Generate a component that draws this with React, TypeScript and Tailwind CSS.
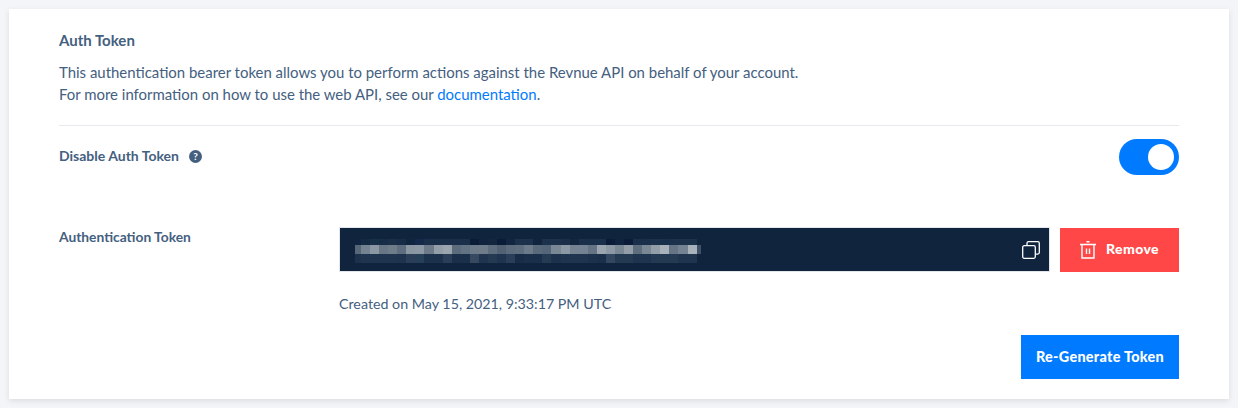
const rows = [
  ["#0f2540","#142a44","#16304a","#172c46","#1a3049","#172c46","#0f2540","#15294a","#1a2f4a","#1a2f4a","#1a2f4a","#1a2f4a","#1a2f4a","#0b1c38","#10233f","#12263f","#0b1c38","#122642","#1c314c","#1c314c","#10233f","#1c314c","#1c314c","#1a2f4a","#12263f","#1a2f4a","#1a2f4a","#1a2f4a","#0b1c38","#10233f","#0b1c38","#1a2f4a","#1a2f4a","#1c314c","#1a2f4a","#1c314c","#1c314c","#1c314c"],
  ["#576778","#748291","#8b97a3","#687685","#6f7d8b","#5f6e7e","#8a96a2","#8c98a4","#6c7a89","#939ea9","#9aa5af","#5d6c7c","#647383","#6c7a89","#6f7d8b","#5f6e7e","#526274","#5d6c7c","#5f6e7e","#6c7a89","#5a6a7a","#55657a","#7a8896","#8c98a4","#748291","#748291","#657484","#9aa5af","#8c98a4","#7a8896","#939ea9","#5f6e7e","#7a8896","#939ea9","#a9b2bb","#667585","#748291","#a9b2bb","#3f5168"],
  ["#1c314c","#1f344e","#1f344e","#1f344e","#1f344e","#1e334d","#2a3e57","#27405a","#1c314c","#1c314c","#2a3e57","#1a2f4a","#1a2f4a","#36495f","#1f344e","#243952","#1f344e","#2a3e57","#172c46","#1a2f4a","#1a2f4a","#253a53","#1c314c","#1f344e","#1f344e","#1f344e","#1c314c","#1a2f4a","#344760","#243952","#243952","#1f344e","#1f344e","#243952","#243952","#243952","#1f344e","#1f344e"],
];

const rowTop = [0, 6, 15];
const rowHeight = [6, 9, 9];
const pitch = 9.07;

function TokenBlur() {
  return (
    <svg width="346" height="24" viewBox="0 0 346 24" className="mt-[3px] block" shapeRendering="crispEdges">
      {rows.map((row, y) =>
        row.map((fill, x) => (
          <rect
            key={`${y}-${x}`}
            x={x === 0 ? 0 : 6 + (x - 1) * pitch}
            y={rowTop[y]}
            width={x === 0 ? 6 : x === 38 ? 4.4 : pitch}
            height={rowHeight[y]}
            fill={fill}
          />
        ))
      )}
    </svg>
  );
}

export default function App() {
  return (
    <div className="min-h-[408px] bg-[#f4f5f8] p-[9px] font-['Lato','Open_Sans',sans-serif] text-[#44607f]">
      <div className="h-[390px] bg-white pl-[50px] pr-[50px] pt-[22px] shadow-[0_2px_6px_rgba(0,0,0,0.1)]">
        <h2 className="text-[15px] font-bold leading-[18px]">Auth Token</h2>
        <p className="mt-[12px] text-[14.94px] leading-[22px]">
          This authentication bearer token allows you to perform actions against the Revnue API on behalf of your account.
          <br />
          For more information on how to use the web API, see our{" "}
          <a className="text-[#007bff]">documentation</a>.
        </p>

        <div className="mt-[20px] flex items-start justify-between border-t border-[#e8e9ec] pt-[13px]">
          <div className="mt-[8px] flex items-center text-[14px] font-bold leading-[18px]">
            Disable Auth Token
            <span className="ml-[10px] flex h-[13px] w-[13px] items-center justify-center rounded-full bg-[#44607f] text-[10px] font-bold leading-none text-white">
              ?
            </span>
          </div>
          <div className="flex h-[36px] w-[60px] items-center justify-end rounded-full bg-[#007bff] pr-[5px]">
            <div className="h-[26px] w-[26px] rounded-full bg-white" />
          </div>
        </div>

        <div className="mt-[52px] flex items-start">
          <div className="mt-[1px] w-[280px] text-[13.8px] font-bold leading-[18px]">Authentication Token</div>
          <div className="flex-1">
            <div className="flex gap-[10px]">
              <div className="flex h-[45px] flex-1 items-center justify-between border border-[#e3e6ea] bg-[#10243e] pl-[15px] pr-[9px]">
                <TokenBlur />
                <svg width="18" height="18" viewBox="0 0 18 18" fill="none" stroke="white" strokeWidth="1.3">
                  <rect x="0.7" y="4.7" width="12.6" height="12.6" rx="1.5" />
                  <path d="M5 4.5V2.2C5 1.4 5.6 0.7 6.4 0.7h9.4c.8 0 1.5.7 1.5 1.5v9.4c0 .8-.7 1.5-1.5 1.5h-2.3" />
                </svg>
              </div>
              <button className="mt-px flex h-[44px] w-[119px] items-center justify-center gap-[10px] bg-[#ff4747] text-[14px] font-black tracking-[0.03em] text-white">
                <svg width="16" height="18" viewBox="0 0 16 18" fill="none" stroke="white" strokeWidth="1.4">
                  <path d="M0 3.5h16M6.5 0.8h3M2 3.5V17h12V3.5M6.5 7.5v5.5M9.5 7.5v5.5" />
                </svg>
                <span className="mb-[3px]">Remove</span>
              </button>
            </div>
            <p className="mt-[22px] text-[14.25px] leading-[20px]">Created on May 15, 2021, 9:33:17 PM UTC</p>
            <div className="mt-[21px] flex justify-end">
              <button className="h-[44px] w-[158px] bg-[#007bff] text-[14.4px] font-black tracking-[0.02em] text-white">Re-Generate Token</button>
            </div>
          </div>
        </div>
      </div>
    </div>
  );
}
